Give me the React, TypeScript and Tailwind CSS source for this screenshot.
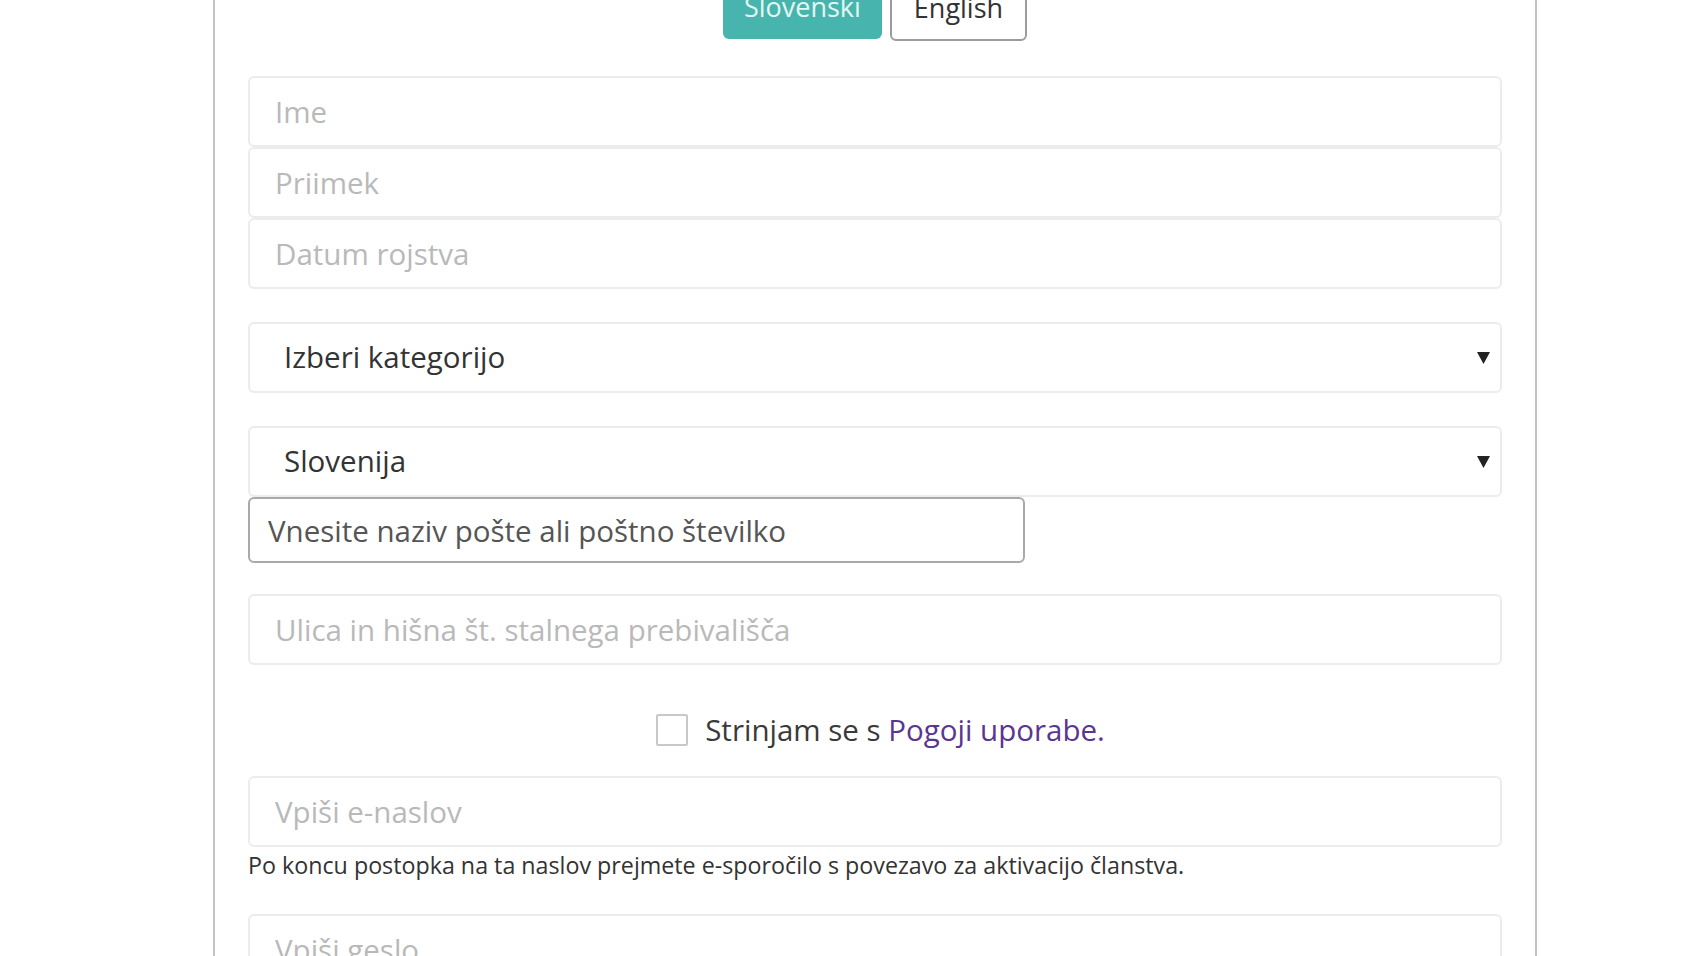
import React from "react";

function Caret() {
  return (
    <svg width="13" height="12" viewBox="0 0 13 12" className="shrink-0">
      <path d="M0 0 H13 L6.5 12 Z" fill="#222" />
    </svg>
  );
}

function TextInput({ placeholder }: { placeholder: string }) {
  return (
    <input
      type="text"
      placeholder={placeholder}
      className="block h-[71px] w-full rounded-[6px] border-2 border-[#ececec] bg-white px-[25px] text-[29.5px] text-[#333] outline-none placeholder:text-[#b9b9b9]"
    />
  );
}

function SelectBox({ label }: { label: string }) {
  return (
    <div className="flex h-[71px] w-full items-center justify-between rounded-[6px] border-2 border-[#ececec] bg-white pl-[34px] pr-[10px]">
      <span className="text-[29.5px] text-[#333]">{label}</span>
      <Caret />
    </div>
  );
}

export default function App() {
  return (
    <div className="h-[956px] w-full overflow-hidden bg-white font-['Open_Sans',sans-serif]">
      <div className="ml-[213px] flex h-full w-[1324px] flex-col border-x-2 border-[#c4c4c4] px-[33px]">
        <div className="-mt-[25px] flex items-start justify-center gap-[8px]">
          <button className="rounded-[6px] bg-[#47b5ad] px-[21px] py-[12px] text-[27px] leading-[40px] text-[#e4f6f3]">
            Slovenski
          </button>
          <button className="rounded-[6px] border-2 border-[#9c9c9c] bg-white px-[22px] py-[11px] text-[27px] leading-[40px] text-[#333]">
            English
          </button>
        </div>

        <div className="mt-[35px]">
          <TextInput placeholder="Ime" />
          <TextInput placeholder="Priimek" />
          <TextInput placeholder="Datum rojstva" />
        </div>

        <div className="mt-[33px]">
          <SelectBox label="Izberi kategorijo" />
        </div>

        <div className="mt-[33px]">
          <SelectBox label="Slovenija" />
          <input
            type="text"
            placeholder="Vnesite naziv pošte ali poštno številko"
            className="block h-[66px] w-[777px] rounded-[6px] border-2 border-[#a9a9a9] bg-white px-[18px] text-[29.5px] text-[#555] outline-none placeholder:text-[#555]"
          />
        </div>

        <div className="mt-[31px]">
          <TextInput placeholder="Ulica in hišna št. stalnega prebivališča" />
        </div>

        <div className="mt-[49px] flex h-[32px] items-center justify-center gap-[17px] pl-[11px]">
          <span className="block h-[32px] w-[32px] shrink-0 rounded-[2px] border-2 border-[#c8c8c8] bg-white" />
          <span className="text-[29.5px] text-[#3a3a3a]">
            Strinjam se s <a className="text-[#5b3592]">Pogoji uporabe.</a>
          </span>
        </div>

        <div className="mt-[30px]">
          <TextInput placeholder="Vpiši e-naslov" />
        </div>
        <p className="mt-[3px] text-[23.25px] leading-[30px] text-[#333]">
          Po koncu postopka na ta naslov prejmete e-sporočilo s povezavo za aktivacijo članstva.
        </p>

        <div className="mt-[34px]">
          <TextInput placeholder="Vpiši geslo" />
        </div>
      </div>
    </div>
  );
}
